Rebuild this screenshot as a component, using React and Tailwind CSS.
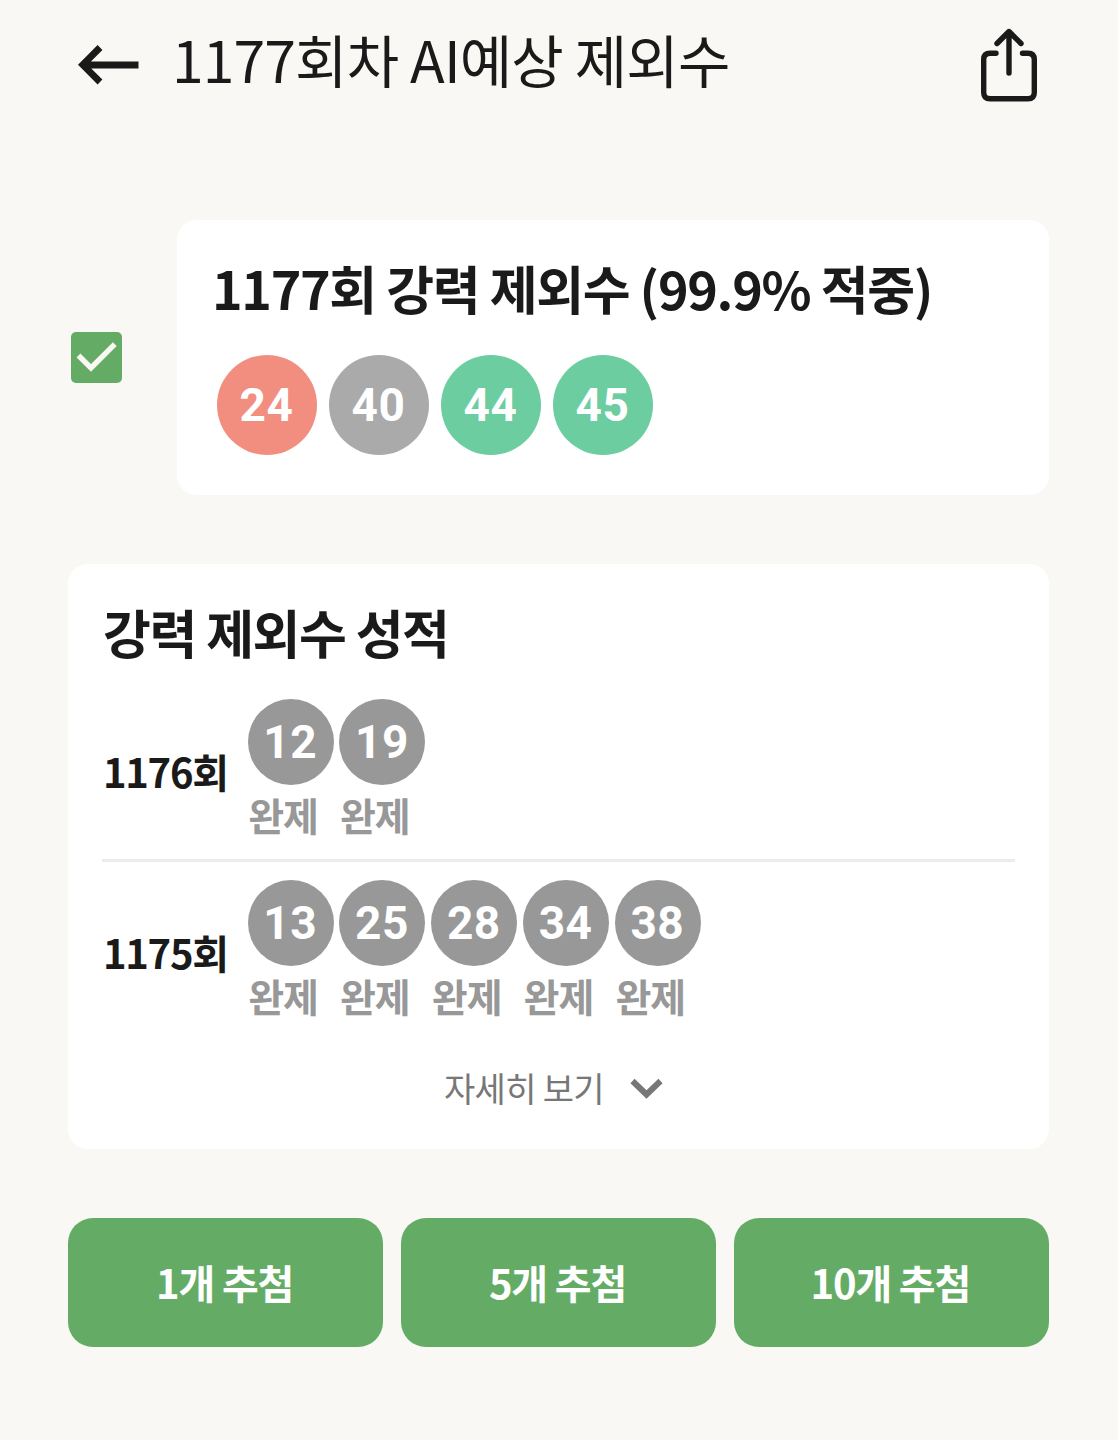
function Ball({ n, color, size }) {
  return (
    <div className={`flex shrink-0 items-center justify-center rounded-full pr-px font-['Roboto',sans-serif] font-bold text-white text-[46px] leading-none tracking-[0.5px] ${size} ${color}`}>
      {n}
    </div>
  );
}

function ResultRow({ round, numbers }) {
  return (
    <div className="flex h-[140px]">
      <div className="-ml-px w-[144.7px] shrink-0 pt-[42px] text-[40px] font-bold leading-[60px] tracking-[-1.3px] whitespace-nowrap">{round}</div>
      <div className="flex gap-[5.8px]">
        {numbers.map((n) => (
          <div key={n} className="w-[86px]">
            <Ball n={n} size="size-[86px]" color="bg-[#989898]" />
            <div className="-mt-px pl-[0.5px] text-[39px] font-bold leading-[60px] tracking-[-1px] text-[#989898] whitespace-nowrap">완제</div>
          </div>
        ))}
      </div>
    </div>
  );
}

export default function App() {
  return (
    <div className="h-[1440px] w-[1118px] overflow-hidden bg-[#f9f8f4] font-['Noto_Sans_CJK_KR','Noto_Sans',sans-serif] text-[#1a1a1a]">
      <header className="flex h-[130px] pl-[78px] pr-[80px]">
        <svg className="mt-[44px] h-[42px] w-[61px] shrink-0" viewBox="0 0 61 42" fill="none" stroke="#1a1a1a" strokeWidth="6.8">
          <path d="M60.5 21H6M22 3.5L4.8 20.8L22 38" />
        </svg>
        <h1 className="ml-[33px] mt-[16px] text-[57px] leading-[84px] tracking-[-0.87px] whitespace-nowrap">1177회차 AI예상 제외수</h1>
        <svg className="ml-auto mt-[27px] h-[76px] w-[58px] shrink-0" viewBox="0 0 58 76" fill="none" stroke="#1a1a1a" strokeWidth="5.4" strokeLinecap="round" strokeLinejoin="round">
          <path d="M16 26.2H10q-6.3 0-6.3 6.3v33q0 6.3 6.3 6.3h38q6.3 0 6.3-6.3v-33q0-6.3-6.3-6.3H42.500M29 46V5M17 16.500L29 4.500l12 12" />
        </svg>
      </header>

      <section className="mt-[90px] flex h-[275px] pl-[71px]">
        <div className="mt-[112px] flex size-[51px] items-center justify-center rounded-[5px] bg-[#64ac65]">
          <svg className="size-[51px]" viewBox="0 0 51 51" fill="none" stroke="#f9f8f4" strokeWidth="5.4">
            <path d="M7.500 23.500L20 36L43.800 12.200" />
          </svg>
        </div>
        <div className="ml-[55px] w-[872px] rounded-[20px] bg-white pl-[35px] pt-[29px]">
          <h2 className="text-[52px] font-bold leading-[78px] tracking-[-1.35px] whitespace-nowrap">1177회 강력 제외수 (99.9% 적중)</h2>
          <div className="mt-[28px] flex gap-[12px] pl-[5px]">
            <Ball n={24} size="size-[100px]" color="bg-[#f28e80]" />
            <Ball n={40} size="size-[100px]" color="bg-[#aaaaaa]" />
            <Ball n={44} size="size-[100px]" color="bg-[#6ccda0]" />
            <Ball n={45} size="size-[100px]" color="bg-[#6ccda0]" />
          </div>
        </div>
      </section>

      <section className="ml-[68px] mt-[69px] h-[585px] w-[981px] rounded-[20px] bg-white px-[36px] pt-[29px]">
        <h2 className="-ml-px h-[106px] text-[52px] font-bold leading-[78px] tracking-[-1.45px]">강력 제외수 성적</h2>
        <ResultRow round="1176회" numbers={[12, 19]} />
        <div className="-mx-[2px] mb-[18px] mt-[20px] h-[3px] bg-[#ececec]" />
        <ResultRow round="1175회" numbers={[13, 25, 28, 34, 38]} />
        <div className="ml-[340px] mt-[38px] flex items-center text-[34px] leading-[60px] tracking-[-0.7px] text-[#777]">
          <span className="w-[186px] whitespace-nowrap">자세히 보기</span>
          <svg className="h-[22px] w-[33px]" viewBox="0 0 33 22" fill="none" stroke="#777" strokeWidth="6">
            <path d="M2.500 4L16.500 17.500L30.500 4" />
          </svg>
        </div>
      </section>

      <div className="ml-[68px] mt-[69px] flex h-[129px] w-[981px] gap-[17.500px]">
        {["1개 추첨", "5개 추첨", "10개 추첨"].map((t) => (
          <button key={t} className="flex-1 rounded-[25px] bg-[#64ac65] pb-px pr-[2px] text-[40px] font-bold tracking-[-1.2px] text-white">{t}</button>
        ))}
      </div>
    </div>
  );
}
